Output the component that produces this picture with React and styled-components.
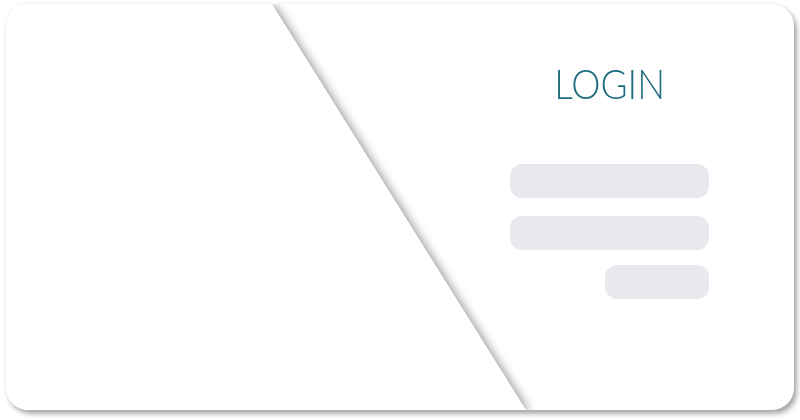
import React from "react";
import styled, { createGlobalStyle } from "styled-components";

const Global = createGlobalStyle`
  html, body { margin: 0; padding: 0; background: #ffffff; }
  body { font-family: "Lato", "Liberation Sans", sans-serif; }
`;

const Page = styled.div`
  width: 800px;
  height: 420px;
  padding: 4px 6px;
  box-sizing: border-box;
`;

const Card = styled.div`
  position: relative;
  width: 788px;
  height: 406px;
  border-radius: 22px;
  background: #ffffff;
  overflow: hidden;
  box-shadow: 3px 4px 5px rgba(0, 0, 0, 0.32), 0 0 4px rgba(0, 0, 0, 0.08);
  display: flex;
  justify-content: flex-end;
`;

const ShapeLayer = styled.div`
  position: absolute;
  inset: 0;
  filter: drop-shadow(4px 2px 5px rgba(0, 0, 0, 0.38));
  pointer-events: none;
`;

const Shape = styled.div`
  width: 100%;
  height: 100%;
  background: #ffffff;
  clip-path: polygon(0 0, 266px 0, 520px 100%, 0 100%);
`;

const Form = styled.div`
  position: relative;
  width: 199px;
  margin-right: 85px;
  padding-top: 56px;
  display: flex;
  flex-direction: column;
  align-items: flex-end;
`;

const Title = styled.h1`
  align-self: center;
  margin: 0 0 56px;
  font-family: "Lato", "Liberation Sans", sans-serif;
  font-weight: 300;
  font-size: 41px;
  line-height: 48px;
  color: #1f6e7f;
  letter-spacing: 0;
  transform: scaleX(0.9);
`;

const Field = styled.div`
  width: ${(p) => p.$w}px;
  height: 34px;
  border-radius: 12px;
  background: #e8e8ee;
  margin-bottom: ${(p) => p.$mb}px;
`;

export default function App() {
  return (
    <>
      <Global />
      <Page>
        <Card>
          <ShapeLayer>
            <Shape />
          </ShapeLayer>
          <Form>
            <Title>LOGIN</Title>
            <Field $w={199} $mb={18} />
            <Field $w={199} $mb={15} />
            <Field $w={104} $mb={0} />
          </Form>
        </Card>
      </Page>
    </>
  );
}
